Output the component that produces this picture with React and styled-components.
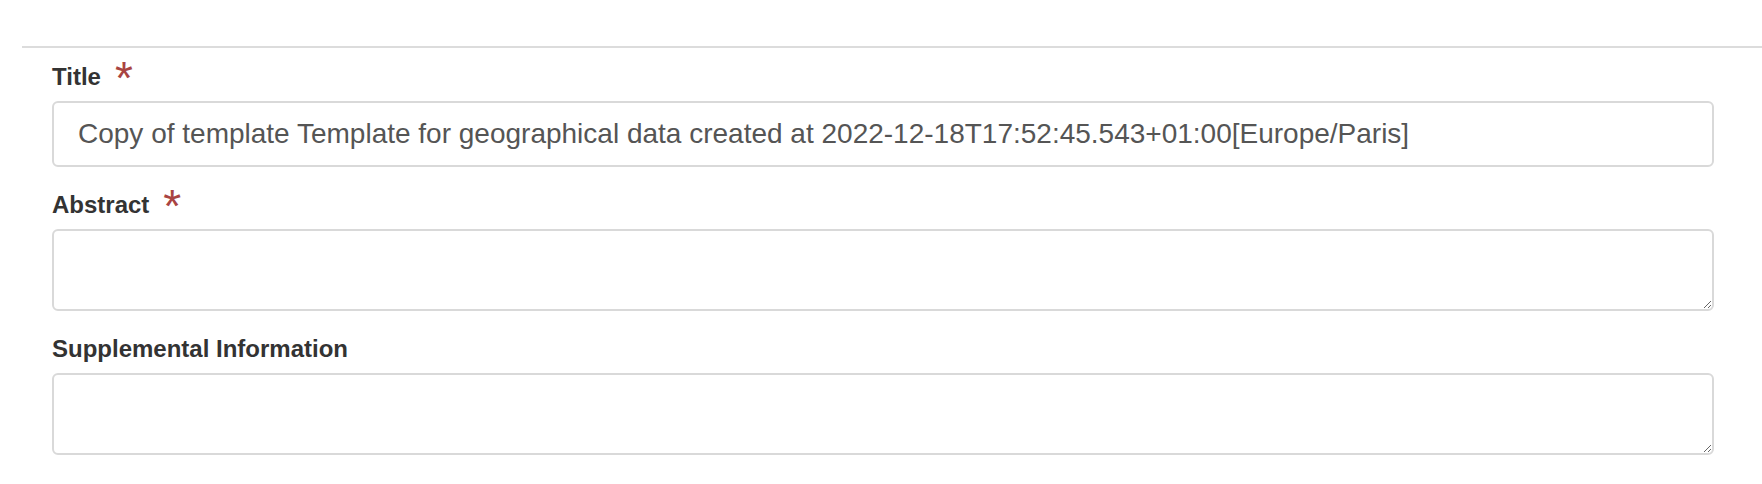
import React from 'react';
import styled, { createGlobalStyle } from 'styled-components';

const GlobalStyle = createGlobalStyle`
  html, body {
    margin: 0;
    padding: 0;
    background: #fff;
  }
  body {
    font-family: 'Liberation Sans', Arial, sans-serif;
    color: #333;
  }
`;

const Page = styled.div`
  padding: 46px 0 0 22px;
`;

const Rule = styled.hr`
  margin: 0;
  height: 0;
  border: none;
  border-top: 2px solid #dcdcdc;
`;

const Form = styled.form`
  padding: 12px 48px 0 30px;
`;

const Group = styled.div`
  margin-bottom: 21px;
`;

const Label = styled.label`
  display: block;
  font-size: 24px;
  font-weight: 700;
  line-height: 34px;
  color: #333;
  margin-bottom: 7px;
`;

const Required = styled.span`
  margin-left: 14px;
  font-size: 46px;
  font-weight: 400;
  line-height: 0;
  color: #a94442;
  vertical-align: -9px;
`;

const fieldBase = `
  display: block;
  box-sizing: border-box;
  width: 100%;
  margin: 0;
  border: 2px solid #d9d9d9;
  border-radius: 6px;
  background: #fff;
  font-family: 'Liberation Sans', Arial, sans-serif;
  font-size: 28px;
  color: #555;
  outline: none;
`;

const TextInput = styled.input`
  ${fieldBase}
  height: 66px;
  padding: 0 24px;
`;

const TextArea = styled.textarea`
  ${fieldBase}
  height: 82px;
  padding: 12px 24px;
  resize: vertical;
`;

const fields = [
  {
    id: 'title',
    label: 'Title',
    required: true,
    kind: 'input',
    value:
      'Copy of template Template for geographical data created at 2022-12-18T17:52:45.543+01:00[Europe/Paris]',
  },
  { id: 'abstract', label: 'Abstract', required: true, kind: 'textarea', value: '' },
  { id: 'supplemental', label: 'Supplemental Information', required: false, kind: 'textarea', value: '' },
];

export default function App() {
  return (
    <Page>
      <GlobalStyle />
      <Rule />
      <Form onSubmit={(e) => e.preventDefault()}>
        {fields.map((f) => (
          <Group key={f.id}>
            <Label htmlFor={f.id}>
              {f.label}
              {f.required && <Required>*</Required>}
            </Label>
            {f.kind === 'input' ? (
              <TextInput id={f.id} type="text" defaultValue={f.value} />
            ) : (
              <TextArea id={f.id} defaultValue={f.value} />
            )}
          </Group>
        ))}
      </Form>
    </Page>
  );
}
